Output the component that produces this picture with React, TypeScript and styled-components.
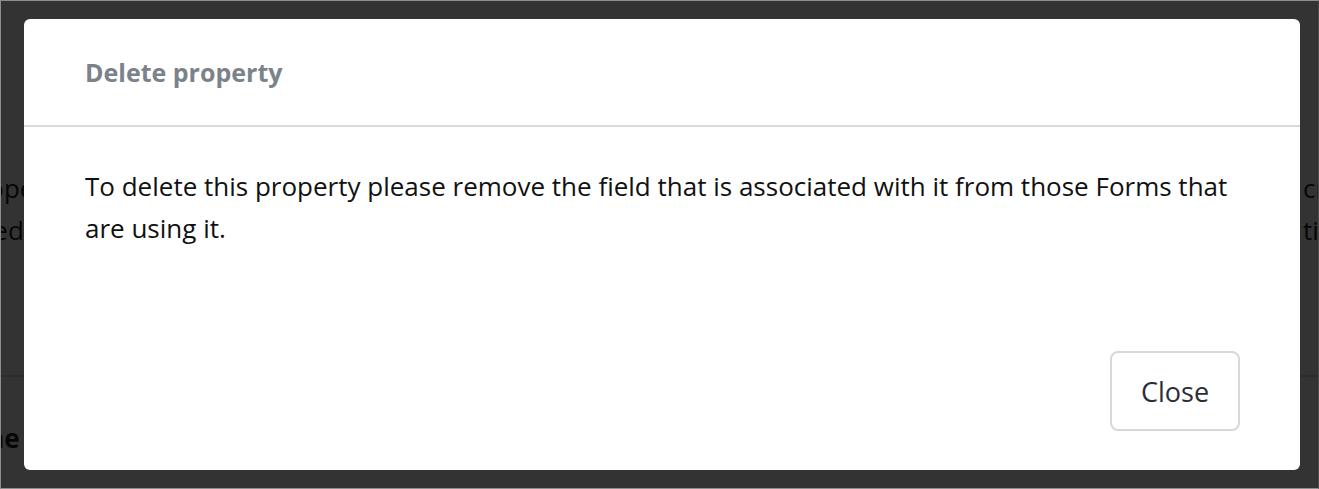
import React from 'react'
import styled, { createGlobalStyle } from 'styled-components'

const GlobalStyle = createGlobalStyle`
  html, body { margin: 0; padding: 0; }
  body { font-family: "Open Sans", "Liberation Sans", sans-serif; background: #fff; }
  * { box-sizing: border-box; }
`

// page that sits behind the dialog; only its edges show
const Page = styled.div`
  height: 489px; overflow: hidden; background: #fff; color: #222;
  font-size: 26px; line-height: 42px;
`
const PageRow = styled.div`
  display: flex; justify-content: space-between;
  padding-top: 167px; margin: 0 -24px 0 -38px;
`
const PageCol = styled.div` display: flex; flex-direction: column; `
const PageDivider = styled.div` margin-top: 124px; border-top: 2px solid #ddd; `
const PageFoot = styled.div` padding-top: 40px; margin-left: -58px; font-weight: 700; `

const Overlay = styled.div`
  position: fixed; inset: 0;
  background: rgba(0,0,0,.8);
  border: 1px solid #8e8e8e; border-right-color: #4a4a4a;
  display: flex; align-items: flex-start;
  padding: 18px 18px 0 23px;
`
const Modal = styled.div`
  flex: 1; background: #fff; border-radius: 6px;
  display: flex; flex-direction: column;
`
const Header = styled.div`
  height: 108px; padding: 0 61px; display: flex; align-items: center;
  border-bottom: 2px solid #d6dadd;
`
const Title = styled.h2`
  margin: 0; font-size: 25px; font-weight: 700; color: #7b828a;
`
const Body = styled.div`
  padding: 38px 60px 102px 61px;
  font-size: 26px; line-height: 42px; color: #111;
`
const Footer = styled.div`
  display: flex; justify-content: flex-end; padding: 0 60px 39px;
`
const Button = styled.button`
  width: 130px; height: 80px; border-radius: 8px;
  border: 2px solid #d5d9dd; background: #fff;
  font-family: inherit; font-size: 27px; color: #2a2f35; cursor: pointer;
`

export default function App() {
  return (
    <>
      <GlobalStyle />
      <Page>
        <PageRow>
          <PageCol>
            <span>Prope</span>
            <span>Used</span>
          </PageCol>
          <PageCol>
            <span>cre</span>
            <span>tim</span>
          </PageCol>
        </PageRow>
        <PageDivider />
        <PageFoot>Name</PageFoot>
      </Page>
      <Overlay>
        <Modal>
          <Header>
            <Title>Delete property</Title>
          </Header>
          <Body>
            To delete this property please remove the field that is associated with it from those Forms that are using it.
          </Body>
          <Footer>
            <Button>Close</Button>
          </Footer>
        </Modal>
      </Overlay>
    </>
  )
}
